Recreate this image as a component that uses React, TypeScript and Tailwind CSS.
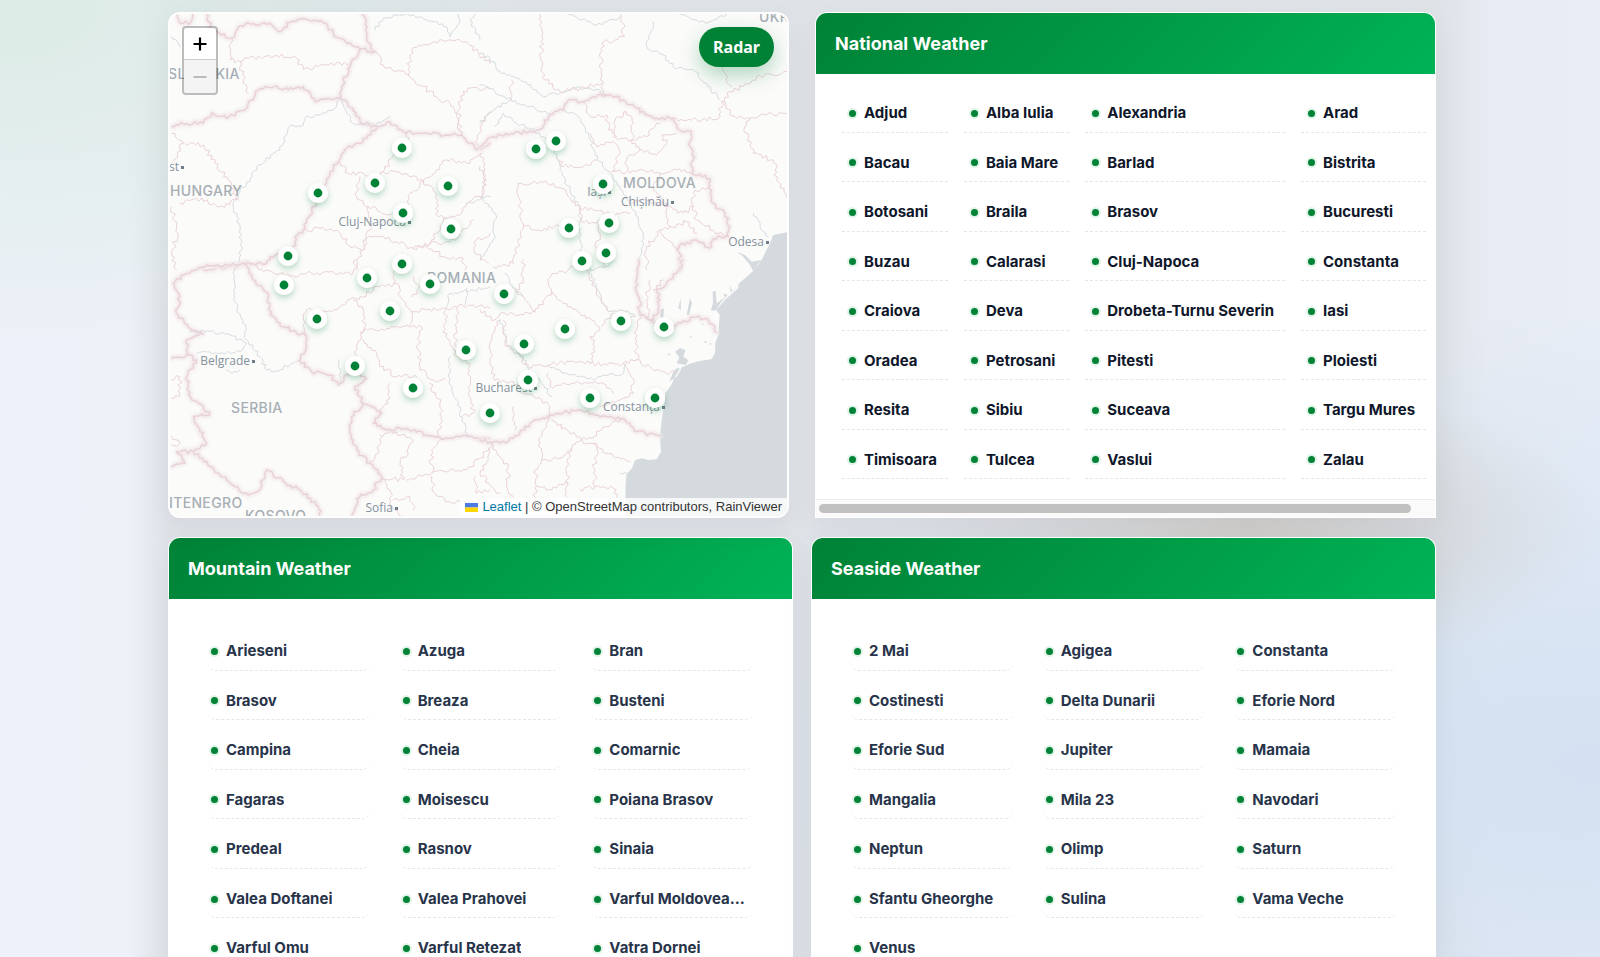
import React from "react";

type Pt = [number, number];

const national = [
  "Adjud", "Alba Iulia", "Alexandria", "Arad",
  "Bacau", "Baia Mare", "Barlad", "Bistrita",
  "Botosani", "Braila", "Brasov", "Bucuresti",
  "Buzau", "Calarasi", "Cluj-Napoca", "Constanta",
  "Craiova", "Deva", "Drobeta-Turnu Severin", "Iasi",
  "Oradea", "Petrosani", "Pitesti", "Ploiesti",
  "Resita", "Sibiu", "Suceava", "Targu Mures",
  "Timisoara", "Tulcea", "Vaslui", "Zalau",
];

const mountain = [
  "Arieseni", "Azuga", "Bran", "Brasov", "Breaza", "Busteni",
  "Campina", "Cheia", "Comarnic", "Fagaras", "Moisescu", "Poiana Brasov",
  "Predeal", "Rasnov", "Sinaia", "Valea Doftanei", "Valea Prahovei", "Varful Moldoveanu",
  "Varful Omu", "Varful Retezat", "Vatra Dornei",
];

const seaside = [
  "2 Mai", "Agigea", "Constanta", "Costinesti", "Delta Dunarii", "Eforie Nord",
  "Eforie Sud", "Jupiter", "Mamaia", "Mangalia", "Mila 23", "Navodari",
  "Neptun", "Olimp", "Saturn", "Sfantu Gheorghe", "Sulina", "Vama Veche", "Venus",
];

const markers: Pt[] = [
  [402, 148], [375, 183], [318, 193], [448, 186], [403, 213], [451, 229], [288, 256], [402, 264],
  [556, 141], [536, 149], [603, 184], [609, 223], [569, 228], [606, 253], [582, 261],
  [284, 285], [367, 278], [430, 284], [390, 311], [317, 319], [355, 366], [413, 388], [466, 350],
  [504, 294], [621, 321], [664, 327], [565, 329], [524, 344], [528, 380], [590, 398], [655, 398], [490, 413],
];

// Map tiles, each drawn at three units per pixel from its own origin.
type Tile = { x: number; y: number; borders: string[]; counties: string[]; rivers: string[] };

const tiles: Tile[] = [
  {
    x: 160, y: 0,
    borders: [
      "140,40 160,95 215,115 235,80 280,70 330,70 355,95 390,68 440,58 490,68 520,100 560,130 600,148 645,155",
      "605,40 622,80 620,110 645,155",
      "50,42 62,70 92,68 98,42",
      "600,148 570,200 550,240 540,295",
      "35,380 80,370 130,370 155,338 200,355 260,325 295,270 350,258 385,270 430,260 465,305 540,295",
      "540,295 580,325 600,365 650,380",
      "650,385 600,430 560,445 535,485 510,515 490,560 455,630 430,690 405,710 400,750 330,770 320,790 270,790 200,800 130,810",
      "650,380 690,365 730,395 790,400 860,405 905,405 950,450 990,430",
    ],
    counties: [
      "215,115 210,180 240,185 265,175 350,165 410,175 430,210 490,195 570,190",
      "240,185 250,240 265,280",
      "645,155 670,195 745,225 790,260 830,290 880,320 905,405",
      "745,225 755,150 800,135 865,120 920,125 990,190",
      "905,405 895,330 910,275 950,262 990,268",
      "950,450 960,380 990,335",
      "75,430 130,435 165,490 205,540 235,600 185,618 110,595 60,610",
      "35,400 70,430 35,490",
      "535,485 565,520 610,520 650,540 670,515 740,520 790,545 830,510 860,480 920,490 965,460",
      "670,515 695,475 750,430 740,400",
      "600,530 590,590 625,620 660,635 700,640",
      "625,620 630,690 610,740",
      "790,545 750,580 740,620 720,650",
      "790,545 830,585 835,650 860,655",
      "965,460 975,540 970,585 920,610 905,640 850,655 830,700 800,740 760,745",
      "430,690 480,685 530,690 570,740 615,745 620,715 670,710 710,725 760,745 810,730 870,725 900,700 940,660",
      "615,745 580,790 590,810",
      "800,740 850,770 910,775 915,810",
      "990,700 950,720 945,760 985,790",
      "35,620 55,700 35,750 50,810",
    ],
    rivers: [
      "540,295 520,330 435,355 430,375 385,382 360,450 290,500 270,545 240,570 220,620 240,680 245,750 225,810",
      "645,90 670,55 735,42 800,60 860,80 870,110",
      "870,110 900,60 890,42",
      "540,295 560,340 580,370 650,375 690,350",
      "960,120 930,60 945,42",
      "920,610 990,590",
      "35,110 60,140",
    ],
  },
  {
    x: 480, y: 0,
    borders: [
      "0,440 40,410 100,402 180,388 210,345 250,330",
      "250,330 265,300 310,305 340,290 385,285 430,300 470,325 500,345 530,355 580,355 605,395 635,395 630,440 640,480 635,520 690,535 690,580 700,610 735,640 750,680 745,710 700,715 690,745 650,720 600,735 600,810",
    ],
    counties: [
      "178,42 188,100 182,180 195,240 240,275 300,265 365,250",
      "420,42 435,110 365,130 362,240 380,290",
      "95,240 90,300",
      "580,355 650,360 720,350 725,305 750,275 790,260 830,230 920,215",
      "725,305 765,350 810,355 860,345 920,340",
      "725,200 755,260",
      "810,355 795,380 820,460 880,480 890,540 920,590",
      "310,305 330,350 380,345 385,390 410,410 400,370 440,335 460,370 455,420 500,410 540,370",
      "330,400 350,440 400,425 420,455 395,515 450,520 490,510 540,520 590,510 635,520",
      "400,410 415,420 455,420 480,450 530,465 560,430 545,405 590,400",
      "480,450 440,480 445,510",
      "540,520 520,570 560,620 610,640 640,620 640,580 690,560",
      "450,610 500,600 560,620 570,680 540,690 500,740 500,810",
      "640,620 650,660 700,690 745,710",
      "570,680 620,665 650,700",
      "230,470 250,500 310,500 350,480",
      "0,500 20,540 5,590",
      "115,550 180,545 220,550 260,580 300,625",
      "115,550 120,600 130,680 170,690 240,680",
      "300,625 305,665 350,670 410,640 450,640",
      "300,625 340,630 390,640",
      "350,670 360,700 345,740 380,800",
      "130,680 110,760 100,790 40,800",
      "540,690 590,750 600,735",
    ],
    rivers: [
      "0,160 30,175 60,215 130,245 170,270 190,290 240,280 300,262 360,270 380,285",
      "250,330 290,345 325,400 345,465 390,520 420,560 450,610 475,660 490,700 485,760 475,810",
      "0,370 40,330 90,300 150,320 210,340",
      "0,255 45,275 95,300",
      "45,380 70,340 110,370 180,400 225,450 240,510 270,570 300,630 300,720 310,810",
      "265,42 350,75 420,50",
      "520,65 500,140 550,165 580,200 640,210 680,250 720,300",
      "820,640 840,680 865,710",
      "0,590 45,640 40,720 0,780",
      "600,42 680,70 740,42",
    ],
  },
  {
    x: 160, y: 260,
    borders: [
      "250,10 280,60 325,100 330,165 370,200 435,225 440,260 420,300 455,335 510,345 535,375 575,330 600,340 620,355 585,380 610,430 575,470 570,520 590,570 630,610 665,650 640,690 590,715 575,768",
      "40,70 80,40 150,18 250,10",
      "40,70 60,110 50,160 90,205 130,222 80,240 80,285 110,300 80,350 85,405 150,465 100,470 140,550 100,575 50,575 75,610 35,620",
      "35,295 80,285",
      "100,575 150,620 200,660 265,705 300,690 320,630 370,665 420,690 475,740 480,768",
      "610,430 665,460 640,490 680,510 740,505 800,525 850,538 920,528 990,535",
    ],
    counties: [
      "250,10 320,30 390,50 440,40 500,35 575,45 590,0",
      "440,150 500,155 545,135 600,110 660,80 710,70 720,110 755,155",
      "440,150 430,180 440,225",
      "580,120 610,150 615,200 590,260 585,300",
      "600,215 680,205 740,195 785,200 775,270 780,330 820,360 855,355",
      "755,155 750,195",
      "610,240 650,280 660,320 710,350 770,350",
      "690,370 685,430 660,460",
      "810,370 840,430 845,500 830,530",
      "755,155 800,150 860,145 850,200 870,250 890,290 930,310 930,390 940,460 905,470",
      "890,145 885,280",
      "860,145 940,135 990,145",
      "700,70 715,0",
      "660,525 700,520 755,535 740,590 720,600 730,660 665,655",
      "665,530 655,580 630,605",
      "850,538 815,570 815,640 740,660",
      "815,640 870,630 920,630 990,565",
      "815,650 825,700 880,730 940,720",
      "945,650 950,700 990,690",
      "665,655 690,690 690,740 730,768",
      "700,720 750,710 760,750",
      "760,50 780,80 755,110",
      "35,360 60,350 60,400 35,415",
      "35,530 60,550 35,555",
    ],
    rivers: [
      "225,25 220,90 230,150 250,180 260,240 300,290 320,330 345,333 420,300",
      "90,215 150,215 210,225 260,250 240,275 180,280 110,280",
      "535,300 545,370",
      "870,290 865,350 890,420 925,530",
      "860,140 870,100 940,90 990,80",
      "920,85 915,135",
      "200,330 215,340 240,330",
    ],
  },
  {
    x: 480, y: 260,
    borders: [
      "475,0 468,60 478,120 480,165 510,180 550,200 590,195 640,172 680,175 705,200 710,218",
      "610,0 590,40 560,70 530,90 540,120 530,165 510,180",
      "0,540 60,550 100,535 150,490 210,465 300,450 360,470 430,475 470,515 540,528",
    ],
    counties: [
      "0,150 45,180 60,160 130,165 165,155 215,95 205,70 225,40 290,20",
      "215,95 250,130 300,160 345,190 360,210 330,230 345,260 330,310",
      "60,180 35,240 30,310 45,360",
      "70,180 75,250 110,280 145,320 205,315 270,305 330,310 380,315 430,310 470,300 470,210 480,165",
      "365,200 400,160 465,170",
      "430,310 460,355 460,400 420,420 360,440",
      "470,300 510,320 550,335 590,340",
      "205,340 210,380 290,365 370,370 400,400",
      "45,360 100,365 130,400 185,420 210,440 205,480",
      "100,440 105,510",
      "205,470 200,500 180,550 185,600 240,595 275,565 305,540 260,510 215,480",
      "305,540 335,535 380,500 430,475",
      "305,540 350,560 340,640 345,680 300,690",
      "275,565 260,620 265,670 215,690 170,680 165,630 185,600",
      "340,550 400,590 450,605",
      "35,550 60,590 85,620 80,680 100,712",
      "35,550 25,600 0,640 25,670 60,700",
      "265,670 260,712", "165,680 165,712", "345,680 400,685 410,712",
      "380,150 345,80 320,20",
      "130,0 130,60 110,100 165,155",
      "510,60 500,120 510,180", "550,60 520,90",
    ],
    rivers: [
      "205,315 260,340 340,360 370,345 430,340 440,310",
      "320,0 350,90 385,155 420,150 465,165",
      "60,180 80,250 130,290 145,325 185,370 215,410",
      "75,40 95,75 130,110",
      "305,30 330,30 380,20 400,0",
      "420,640 440,640",
    ],
  },
];

const parse = (s: string): Pt[] => s.split(" ").map((p) => p.split(",").map(Number) as Pt);

// Splits every stretch of a line into short steps with a repeatable sideways jitter.
function rough(source: string, amp: number): string {
  const pts = parse(source);
  let seed = Math.round(pts[0][0] * 31 + pts[0][1] * 17 + pts.length * 7) + 1;
  const rnd = () => {
    seed = (seed * 16807) % 2147483647;
    return seed / 2147483647 - 0.5;
  };
  rnd();
  let d = `M${pts[0][0]} ${pts[0][1]}`;
  for (let i = 1; i < pts.length; i++) {
    const [ax, ay] = pts[i - 1];
    const [bx, by] = pts[i];
    const len = Math.hypot(bx - ax, by - ay) || 1;
    const n = Math.max(1, Math.round(len / 8));
    for (let k = 1; k <= n; k++) {
      const t = k / n;
      const j = k === n ? 0 : rnd() * amp;
      d += `L${(ax + (bx - ax) * t - ((by - ay) / len) * j).toFixed(1)} ${(ay + (by - ay) * t + ((bx - ax) / len) * j).toFixed(1)}`;
    }
  }
  return d;
}

const countries: { t: string; x: number; y: number }[] = [
  { t: "SLOVAKIA", x: 168, y: 79 },
  { t: "HUNGARY", x: 170, y: 196 },
  { t: "MOLDOVA", x: 623, y: 188 },
  { t: "ROMANIA", x: 427, y: 283 },
  { t: "SERBIA", x: 231, y: 413 },
  { t: "MONTENEGRO", x: 138, y: 508 },
  { t: "KOSOVO", x: 245, y: 521 },
  { t: "UKRAINE", x: 759, y: 22 },
];

const towns: { t: string; x: number; y: number }[] = [
  { t: "Budapest", x: 179, y: 171 },
  { t: "Cluj-Napoca", x: 406, y: 226 },
  { t: "Iași", x: 606, y: 196 },
  { t: "Chișinău", x: 669, y: 206 },
  { t: "Odesa", x: 764, y: 246 },
  { t: "Belgrade", x: 250, y: 365 },
  { t: "Bucharest", x: 532, y: 392 },
  { t: "Constanța", x: 660, y: 411 },
  { t: "Sofia", x: 393, y: 512 },
];

function MapDrawing() {
  return (
    <svg
      viewBox="170 14 617 502"
      preserveAspectRatio="xMidYMid slice"
      className="block h-full w-full"
      role="img"
      aria-label="Weather map"
    >
      <defs>
        <filter id="pin" x="-100%" y="-100%" width="300%" height="300%">
          <feDropShadow dx="0" dy="3" stdDeviation="3" floodColor="#008236" floodOpacity="0.3" />
        </filter>
        <filter id="halo" x="-5%" y="-5%" width="110%" height="110%">
          <feGaussianBlur stdDeviation="5" />
        </filter>
      </defs>
      <rect x="150" y="0" width="660" height="530" fill="#fbfbfa" />
      <path
        transform="translate(480 260) scale(0.3333)"
        fill="#d4dadd"
        d="M925-84L880-75L870-50L845 0L835 10L820 32L800 50L775 72L760 90L740 108L722 128L708 150L719 164L715 225L706 250L705 280L694 298L655 304L628 312L600 325L585 350L574 375L556 400L552 440L545 480L540 530L543 575L530 598L505 600L485 595L465 601L456 625L440 642L437 670L435 800H960V-84Z
           M845 0L820 32L806 10L790-10L770-25L795-15L815 5Z
           M708 150L693 152L699 128L698 95L707 92L710 130L735 112L730 100L742 105L752 98L750 72L757 95L775 72L775 85L740 115Z
           M585 275L600 264L617 270L610 290L625 300L618 315L590 310L598 292ZM568 365L580 335L590 325L605 325L590 350ZM545 190L538 150L552 145L550 175ZM595 145L602 115L603 150ZM620 165L630 115L636 130L627 165ZM500 165L520 185L512 192Z
           M627 230l8-2l-2 6zM672 243l10 2l-6 5zM690 248l6 4l-8 2zM562 280l10 2l-5 5zM665 190l8 4l-7 2z"
      />
      {tiles.map((tile) => (
        <g
          key={`${tile.x}-${tile.y}`}
          transform={`translate(${tile.x} ${tile.y}) scale(0.3333)`}
          fill="none"
          strokeLinejoin="round"
          strokeLinecap="round"
        >
          <g filter="url(#halo)">
            {tile.borders.map((s) => (
              <path key={s} d={rough(s, 14)} stroke="#f3e9eb" strokeWidth="14" />
            ))}
          </g>
          {tile.rivers.map((s) => (
            <path key={s} d={rough(s, 11)} stroke="#d5d9dd" strokeWidth="2.8" />
          ))}
          {tile.counties.map((s) => (
            <path key={s} d={rough(s, 15)} stroke="#ead2d7" strokeWidth="3" />
          ))}
          {tile.borders.map((s) => (
            <path key={s} d={rough(s, 12)} stroke="#e8d1d6" strokeWidth="4" />
          ))}
        </g>
      ))}
      <g fill="#a6aeb4" fontSize="14" className="font-['Inter',sans-serif] font-medium tracking-wide">
        {countries.map((c) => (
          <text key={c.t} x={c.x} y={c.y}>{c.t}</text>
        ))}
      </g>
      <g fill="#85919c" fontSize="12" textAnchor="end" className="font-['Open_Sans',sans-serif] font-medium">
        {towns.map((c) => (
          <g key={c.t}>
            <text x={c.x} y={c.y}>{c.t}</text>
            <rect x={c.x + 2} y={c.y - 5} width="3" height="3" fill="#6f7d89" />
          </g>
        ))}
      </g>
      {markers.map(([x, y]) => (
        <g key={`${x}-${y}`}>
          <circle cx={x} cy={y} r="10" fill="#fff" filter="url(#pin)" />
          <circle cx={x} cy={y} r="4.4" fill="#008236" />
        </g>
      ))}
    </svg>
  );
}

function WeatherMap() {
  return (
    <section className="relative h-[506px] overflow-hidden rounded-xl border-2 border-white/80 bg-[#fbfbfa] shadow-[0_10px_30px_rgba(15,23,42,0.05)]">
      <MapDrawing />
      <div className="absolute top-3 left-3 flex w-9 flex-col rounded border-2 border-black/25 bg-clip-padding">
        <button type="button" aria-label="Zoom in" className="flex h-8 items-center justify-center rounded-t-sm border-b border-[#ccc] bg-white">
          <svg width="14" height="14" viewBox="0 0 14 14" stroke="#000" strokeWidth="2.2"><path d="M7 0.5V13.5M0.5 7H13.5" /></svg>
        </button>
        <button type="button" aria-label="Zoom out" disabled className="flex h-[33px] items-center justify-center rounded-b-sm bg-[#f4f4f4]">
          <svg width="14" height="14" viewBox="0 0 14 14" stroke="#bbb" strokeWidth="2"><path d="M0.5 7H13.5" /></svg>
        </button>
      </div>
      <button
        type="button"
        className="absolute top-[13px] right-[13px] h-10 rounded-full bg-[#008236] px-[14px] font-['Noto_Sans',sans-serif] text-base font-bold text-white shadow-[0_8px_20px_rgba(0,130,54,0.3)]"
      >
        Radar
      </button>
      <div className="absolute right-0 bottom-0 flex h-[18px] items-center gap-1 bg-white/80 px-[5px] font-['Liberation_Sans',sans-serif] text-[13px] whitespace-nowrap text-[#333]">
        <svg width="13" height="9" viewBox="0 0 13 9"><path fill="#4c7be1" d="M0 0h13v4.5H0z" /><path fill="#ffd500" d="M0 4.5h13V9H0z" /></svg>
        <span><a href="#leaflet" className="text-[#0078a8]">Leaflet</a> | © OpenStreetMap contributors, RainViewer</span>
      </div>
    </section>
  );
}

function CardHeader({ title }: { title: string }) {
  return (
    <header className="flex h-[61px] items-center bg-linear-135 from-[#008236] to-[#00b356] px-[19px]">
      <h2 className="text-lg font-bold text-white">{title}</h2>
    </header>
  );
}

function Dot() {
  return <span className="size-[7px] shrink-0 rounded-full bg-[#008236] shadow-[0_0_0_2px_rgba(0,166,62,0.12)]" />;
}

function CityCard({ title, cities }: { title: string; cities: string[] }) {
  return (
    <section className="overflow-hidden rounded-xl border border-white/70 bg-white shadow-[0_10px_30px_rgba(15,23,42,0.05)]">
      <CardHeader title={title} />
      <ul className="grid h-[401px] grid-cols-3 gap-x-[30px] px-[39px] pt-[22px] pb-8">
        {cities.map((c) => (
          <li key={c} className="min-w-0">
            <a href="#city" className="flex h-full items-center gap-2 rounded-lg border-b border-dashed border-[#e2e8ea] pt-3 pr-2 pl-[3px] text-[15px] font-bold text-[#28344a]">
              <Dot />
              <span className="truncate">{c}</span>
            </a>
          </li>
        ))}
      </ul>
    </section>
  );
}

function NationalCard() {
  return (
    <section className="flex h-[506px] flex-col overflow-hidden rounded-t-xl border border-white/70 bg-white shadow-[0_10px_30px_rgba(15,23,42,0.05)]">
      <CardHeader title="National Weather" />
      <div className="flex-1 overflow-hidden pt-[9px] pr-2 pl-[26px]">
        <ul className="grid h-[396px] w-max grid-cols-[repeat(4,auto)] gap-x-4">
          {national.map((c) => (
            <li key={c}>
              <a href="#city" className="flex h-full items-center gap-2 border-b border-dashed border-[#e2e8ea] pt-3 pr-[11px] pl-[7px] text-[15px] font-bold whitespace-nowrap text-[#0f172a]">
                <Dot />
                {c}
              </a>
            </li>
          ))}
        </ul>
      </div>
      <div className="flex h-[18px] items-center border-t border-[#ececec] bg-[#fafafa] px-[3px]">
        <div className="h-[9px] w-[96.5%] rounded-full bg-[#c1c1c1]" />
      </div>
    </section>
  );
}

export default function App() {
  return (
    <div className="h-screen overflow-hidden bg-[radial-gradient(ellipse_at_0%_0%,#dbebe5_0%,transparent_26%),radial-gradient(ellipse_at_78%_55%,#d0cecb_0%,transparent_20%),radial-gradient(ellipse_at_100%_80%,#d3e1f2_0%,transparent_42%),linear-gradient(90deg,#edf1f9_0%,#edf1f8_8%,#dfe3e8_10.5%,#dfe3e8_90%,#e7ebf3_93%,#e8edf6_100%)] pl-1 font-['Inter',sans-serif]">
      <main className="mx-auto max-w-[1268px] pt-3">
        <div className="grid grid-cols-2 gap-[26px]">
          <WeatherMap />
          <NationalCard />
        </div>
        <div className="mt-[19px] grid grid-cols-2 gap-[18px]">
          <CityCard title="Mountain Weather" cities={mountain} />
          <CityCard title="Seaside Weather" cities={seaside} />
        </div>
      </main>
    </div>
  );
}
